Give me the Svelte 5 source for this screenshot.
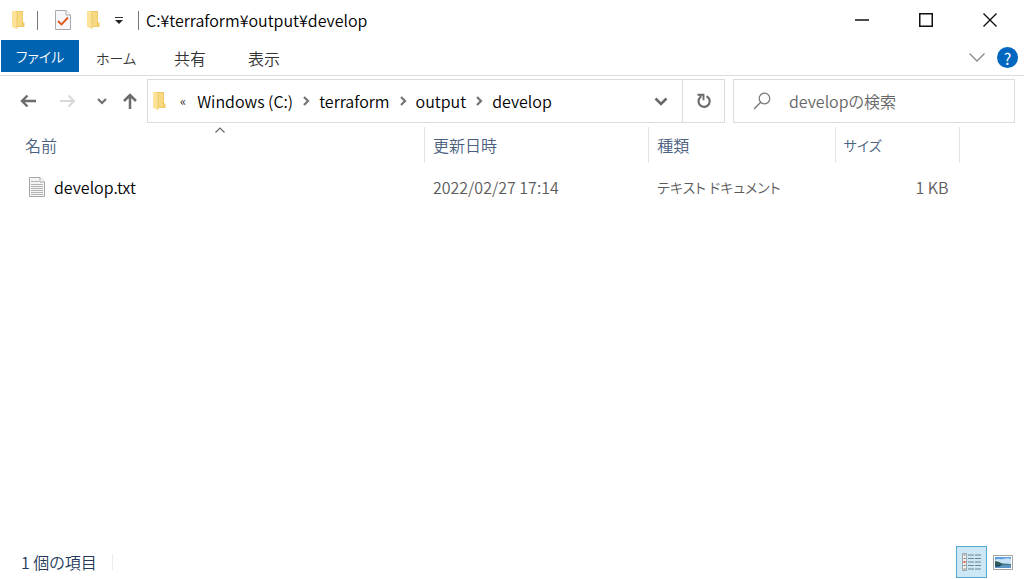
<script>
  const crumbs = ['Windows (C:)', 'terraform', 'output', 'develop'];
  const tabs = [
    { label: 'ホーム', kana: true },
    { label: '共有', kana: false },
    { label: '表示', kana: false }
  ];
  const files = [
    { name: 'develop.txt', date: '2022/02/27 17:14', type: 'テキスト ドキュメント', size: '1 KB' }
  ];
  let view = $state('details');
</script>

{#snippet folder()}
  <svg class="folder" viewBox="0 0 14 18" width="14" height="18" aria-hidden="true">
    <path d="M4 0h8v11l1.500 1v4H4z" fill="#f0c967" />
    <path d="M5 1h6v14H5z" fill="#f7d983" />
    <path d="M1 0h3l2 2v16l-5-2z" fill="#fde39a" />
    <path d="M6 2v15.500" stroke="#e9c25e" stroke-width=".8" fill="none" />
  </svg>
{/snippet}

<div class="window">
  <header class="titlebar">
    {@render folder()}
    <span class="bar first"></span>
    <button class="quick check" aria-label="プロパティ">
      <svg viewBox="0 0 16 20" width="16" height="20">
        <path d="M.5.5h10.500l4.500 4.500v14.500H.5z" fill="#f7f7fa" stroke="#a9a9ad" />
        <path d="M11 .5V5h4.500" fill="#fff" stroke="#a9a9ad" />
        <path d="M3 11l3.500 3.500 6.500-7" fill="none" stroke="#e15a20" stroke-width="1.900" />
      </svg>
    </button>
    <button class="quick new" aria-label="新しいフォルダー">{@render folder()}</button>
    <button class="quick more" aria-label="クイック アクセス ツール バーのカスタマイズ">
      <svg viewBox="0 0 8 7" width="8" height="7"><path d="M0 .5h8" stroke="#333" /><path d="M0 3h8L4 7z" fill="#222" /></svg>
    </button>
    <span class="bar"></span>
    <h1>C:¥terraform¥output¥develop</h1>
    <div class="controls">
      <button aria-label="最小化"><svg viewBox="0 0 14 14" width="14" height="14"><path d="M0 7h14" stroke="#111" stroke-width="1.500" /></svg></button>
      <button aria-label="最大化"><svg viewBox="0 0 14 14" width="14" height="14"><path d="M.75.75h12.500v12.500H.75z" fill="none" stroke="#111" stroke-width="1.500" /></svg></button>
      <button aria-label="閉じる"><svg viewBox="0 0 14 14" width="14" height="14"><path d="M.5.5l13 13M13.500.5l-13 13" stroke="#111" stroke-width="1.400" /></svg></button>
    </div>
  </header>

  <nav class="tabs">
    <button class="file kana">ファイル</button>
    {#each tabs as tab}
      <button class="tab" class:kana={tab.kana}>{tab.label}</button>
    {/each}
    <button class="expand" aria-label="リボンの展開">
      <svg viewBox="0 0 16 9" width="16" height="9"><path d="M.5.5L8 8l7.500-7.500" fill="none" stroke="#888" stroke-width="1.300" /></svg>
    </button>
    <button class="help" aria-label="ヘルプ">?</button>
  </nav>

  <div class="navigation">
    <div class="arrows">
      <button class="back" aria-label="戻る"><svg viewBox="0 0 16 14" width="16" height="14"><path d="M16 7H2M7.500 1.500L2 7l5.500 5.500" fill="none" stroke="#6c6c6c" stroke-width="2.400" /></svg></button>
      <button class="forward" aria-label="進む"><svg viewBox="0 0 16 14" width="16" height="14"><path d="M0 7h14M8.500 1.500L14 7l-5.500 5.500" fill="none" stroke="#d8d8d8" stroke-width="2" /></svg></button>
      <button class="recent" aria-label="最近表示した場所"><svg viewBox="0 0 10 7" width="10" height="7"><path d="M1 1l4 4 4-4" fill="none" stroke="#707070" stroke-width="2.200" /></svg></button>
      <button class="up" aria-label="上へ"><svg viewBox="0 0 14 16" width="14" height="16"><path d="M7 16V2M1 8l6-6 6 6" fill="none" stroke="#6c6c6c" stroke-width="2.500" /></svg></button>
    </div>
    <div class="address">
      {@render folder()}
      <span class="root">«</span>
      {#each crumbs as crumb, i}
        {#if i > 0}
          <svg class="sep" viewBox="0 0 7 10" width="7" height="10" aria-hidden="true"><path d="M1 1l4 4-4 4" fill="none" stroke="#747474" stroke-width="2.200" /></svg>
        {/if}
        <button class="crumb">{crumb}</button>
      {/each}
      <button class="history" aria-label="以前の場所"><svg viewBox="0 0 14 9" width="14" height="9"><path d="M1.500 1.500L7 7l5.500-5.500" fill="none" stroke="#666" stroke-width="2.500" /></svg></button>
      <button class="refresh" aria-label="最新の情報に更新">
        <svg viewBox="0 0 16 16" width="16" height="16"><path d="M10.500 3.200A5.600 5.600 0 1 1 4.500 4V1.800" fill="none" stroke="#6c6c6c" stroke-width="2.200" /><path d="M1.500 1.800h6v5.400" fill="none" stroke="#6c6c6c" stroke-width="1.900" /></svg>
      </button>
    </div>
    <label class="search">
      <svg viewBox="0 0 18 18" width="18" height="18" aria-hidden="true"><circle cx="11.500" cy="6.500" r="5.300" fill="none" stroke="#777" stroke-width="1.200" /><path d="M7.700 10.300L1 17" stroke="#777" stroke-width="1.300" /></svg>
      <input type="text" placeholder="developの検索" aria-label="developの検索" />
    </label>
  </div>

  <main>
    <table>
      <colgroup><col class="c-name" /><col class="c-date" /><col class="c-type" /><col class="c-size" /><col class="c-rest" /></colgroup>
      <thead>
        <tr>
          <th class="name">名前<svg class="sort" viewBox="0 0 10 6" width="10" height="6" aria-hidden="true"><path d="M.5 5.500L5 1l4.500 4.500" fill="none" stroke="#666" stroke-width="1.200" /></svg></th>
          <th>更新日時</th>
          <th>種類</th>
          <th class="kana">サイズ</th>
          <td></td>
        </tr>
      </thead>
      <tbody>
        {#each files as file}
          <tr>
            <td class="name">
              <div class="entry">
                <svg viewBox="0 0 16 20" width="16" height="20" aria-hidden="true">
                  <path d="M.5.5h10.500l4.500 4.500v14.500H.5z" fill="#f5f5f5" stroke="#a6a6a6" />
                  <path d="M11 .5V5h4.500" fill="#fff" stroke="#a6a6a6" />
                  <path d="M2 4.500h8M2 7.500h12M2 9.500h12M2 11.500h12M2 13.500h12M2 15.500h12M2 17.500h12" stroke="#b3b3b3" />
                </svg>
                <span>{file.name}</span>
              </div>
            </td>
            <td>{file.date}</td>
            <td class="kana">{file.type}</td>
            <td class="size">{file.size}</td>
            <td></td>
          </tr>
        {/each}
      </tbody>
    </table>
  </main>

  <footer>
    <span class="count">1 個の項目</span>
    <div class="views">
      <button class:active={view === 'details'} aria-label="詳細" onclick={() => (view = 'details')}>
        <svg viewBox="0 0 20 18" width="20" height="18">
          <path d="M.5.5h4v17h-4z" fill="#f7f2f0" stroke="#8b979d" stroke-width=".8" />
          <path d="M6 2h6M13 2h6M6 5.500h6M13 5.500h6M6 9h6M13 9h6M6 12.500h6M13 12.500h6M6 16h6M13 16h6" stroke="#71848c" />
          <path d="M1.500 2h2M1.500 5.500h2M1.500 12.500h2M1.500 16h2" stroke="#66747a" stroke-width="1.200" />
          <path d="M1.500 9h2" stroke="#df5a40" stroke-width="2" />
        </svg>
      </button>
      <button class:active={view === 'large'} aria-label="大アイコン" onclick={() => (view = 'large')}>
        <svg viewBox="0 0 20 15" width="20" height="15">
          <path d="M.5.5h19v14H.5z" fill="#fff" stroke="#a3a3a3" />
          <path d="M2 2h16v11H2z" fill="#5c9fe0" />
          <path d="M2 5c3-2 5 0 8-1s5-1 8 0v5H2z" fill="#c9e2f5" />
          <path d="M2 6l4 1 3 1.500 9 .5v1H2z" fill="#2a5a50" />
          <path d="M2 9.500h16V13H2z" fill="#5a94c0" />
          <path d="M2 9.500h8l-4 2H2z" fill="#1d4350" />
        </svg>
      </button>
    </div>
  </footer>
</div>

<style>
  :global(body) { margin: 0; background: #fff; }
  .window {
    display: flex;
    flex-direction: column;
    min-height: 100vh;
    font-family: "Noto Sans CJK JP", "Noto Sans", sans-serif;
    font-size: 16px;
    font-weight: 350;
    line-height: 24px;
    font-feature-settings: "palt";
    color: #111;
  }
  button, input { font: inherit; font-feature-settings: inherit; color: inherit; border: 0; background: none; padding: 0; margin: 0; }
  button { display: flex; align-items: center; justify-content: center; }
  svg { display: block; flex: none; }
  .kana { font-size: 14px; }
  .titlebar { display: flex; align-items: center; height: 40px; padding: 0 2px 0 11px; }
  .bar { width: 1px; height: 19px; background: #777; }
  .first { margin-left: 12px; }
  .check { margin-left: 17px; }
  .new { margin-left: 15px; }
  .more { margin: 0 15px; }
  h1 { font: inherit; margin: 0 0 0 7px; color: #000; }
  .controls { display: flex; margin-left: auto; align-self: stretch; }
  .controls button { width: 64px; }

  .tabs { display: flex; align-items: center; height: 35px; padding-left: 1px; border-bottom: 1px solid #dcdcdf; }
  .file { align-self: flex-start; width: 78px; height: 32px; background: #0063b1; color: #fff; }
  .tab { width: 74px; color: #333; }
  .expand { margin-left: auto; }
  .help { width: 21px; height: 21px; margin: 0 6px 0 12px; border-radius: 50%; background: #0067c0; color: #fff; font-weight: 400; line-height: 20px; }

  .navigation { display: flex; align-items: stretch; height: 44px; padding: 3px 9px 0 0; }
  .arrows { display: flex; align-items: center; flex: none; width: 147px; box-sizing: border-box; padding-left: 20px; }
  .forward { margin-left: 24px; }
  .recent { margin-left: 21px; }
  .up { margin-left: 16px; }
  .address, .search { display: flex; align-items: center; box-sizing: border-box; border: 1px solid #dcdcdc; }
  .address { flex: 2 1 578px; padding-left: 4px; }
  .root { margin: 0 11px 0 14px; font-size: 13px; }
  .crumb { color: #000; }
  .sep { margin: 0 9px 0 10px; }
  .history { width: 42px; margin-left: auto; align-self: stretch; }
  .refresh { width: 42px; align-self: stretch; border-left: 1px solid #dcdcdc; }
  .search { flex: 1 1 282px; margin-left: 8px; padding-left: 19px; }
  .search input { flex: 1; min-width: 0; margin-left: 18px; outline: 0; }
  .search input::placeholder { color: #666; opacity: 1; }

  main { flex: 1; padding-top: 4px; }
  table { width: 100%; border-collapse: separate; border-spacing: 0; table-layout: fixed; }
  .c-name { width: 41.5%; }
  .c-date { width: 21.9%; }
  .c-type { width: 18.2%; }
  .c-size { width: 12.2%; }
  th, td { padding: 0 8px; text-align: left; font-weight: inherit; }
  th { position: relative; height: 36px; color: #4a607e; border-right: 1px solid #e3e3e6; }
  td { height: 48px; color: #5c5c5c; }
  thead td { height: 36px; }
  .name { padding-left: 25px; }
  .sort { position: absolute; left: 215px; top: 0; }
  .entry { display: flex; align-items: center; gap: 9px; padding-left: 4px; color: #000; }
  .size { text-align: right; padding-right: 12px; }

  footer { display: flex; align-items: center; justify-content: space-between; height: 34px; padding-left: 21px; color: #23395b; }
  .count { padding-right: 15px; border-right: 1px solid #ededed; line-height: 16px; }
  .views { display: flex; align-items: center; padding-right: 6px; }
  .views button { width: 31px; height: 32px; box-sizing: border-box; border: 1px solid transparent; }
  .views .active { background: #cce8f6; border-color: #56a9d3; }
</style>
